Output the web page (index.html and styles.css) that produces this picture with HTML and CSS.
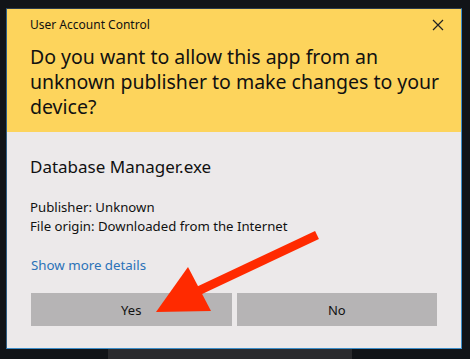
FILE: index.html
```html
<!DOCTYPE html>
<html>
<head>
<meta charset="utf-8">
<link rel="stylesheet" href="styles.css">
</head>
<body>
<div class="screen">
  <div class="dialog">
    <div class="header">
      <div class="titlebar">
        <span class="title">User Account Control</span>
        <svg class="close" width="12" height="12" viewBox="0 0 12 12"><path d="M1 1L11 11M11 1L1 11" stroke="#222" stroke-width="1.2" fill="none"/></svg>
      </div>
      <div class="question">Do you want to allow this app from an unknown publisher to make changes to your device?</div>
    </div>
    <div class="body">
      <div class="app">Database Manager.exe</div>
      <div class="info">
        <div>Publisher: Unknown</div>
        <div>File origin: Downloaded from the Internet</div>
      </div>
      <a class="more">Show more details</a>
      <div class="buttons">
        <div class="btn">Yes</div>
        <div class="btn">No</div>
      </div>
    </div>
  </div>
  <div class="shadowstrip"></div>
  <svg class="arrow" width="470" height="359" viewBox="0 0 470 359">
    <line x1="317" y1="235" x2="196" y2="292" stroke="#ff2a00" stroke-width="9"/>
    <polygon points="156,312 188,267 211,311" fill="#ff2a00"/>
  </svg>
</div>
</body>
</html>
```

FILE: styles.css
```css
html, body {
  margin: 0;
  padding: 0;
  background: #111418;
}
.screen {
  position: relative;
  width: 470px;
  height: 359px;
  overflow: hidden;
  background: #111418;
  padding-top: 8px;
  box-sizing: border-box;
}
.dialog {
  margin-left: 6px;
  width: 456px;
  height: 341px;
  border: 1px solid #3d8ec9;
  border-top-color: #2a3a4a;
  border-left-color: #2f5f85;
  box-sizing: border-box;
  display: flex;
  flex-direction: column;
  font-family: "Noto Sans", "Open Sans", sans-serif;
  color: #111;
}
.header {
  background: #fdd45c;
  height: 123px;
  padding: 0 0 0 23px;
  box-sizing: border-box;
}
.titlebar {
  display: flex;
  align-items: center;
  justify-content: space-between;
  height: 30px;
  padding-right: 17px;
}
.title {
  font-size: 12px;
  padding-top: 1px;
}
.close {
  margin-top: 1px;
}
.question {
  font-size: 19.5px;
  line-height: 25px;
  padding-right: 20px;
  margin-top: 5px;
}
.body {
  flex: 1;
  background: #ece9ea;
  padding: 23px 23px 0 23px;
  display: flex;
  flex-direction: column;
}
.app {
  font-size: 17px;
  line-height: 24px;
}
.info {
  margin-top: 19px;
  font-size: 13.2px;
  line-height: 19px;
}
.more {
  margin-top: 20px;
  font-size: 13.3px;
  line-height: 19px;
  color: #2b72b8;
  padding-left: 1px;
}
.buttons {
  display: flex;
  gap: 5px;
  margin-top: 18px;
  padding-left: 1px;
  padding-right: 1px;
}
.btn {
  width: 201px;
  height: 33px;
  background: #b6b4b5;
  display: flex;
  align-items: center;
  justify-content: center;
  font-size: 13px;
  color: #111;
}
.shadowstrip {
  margin-left: 108px;
  width: 244px;
  height: 10px;
  background: #2a2b2e;
}
.arrow {
  position: absolute;
  left: 0;
  top: 0;
}
```
